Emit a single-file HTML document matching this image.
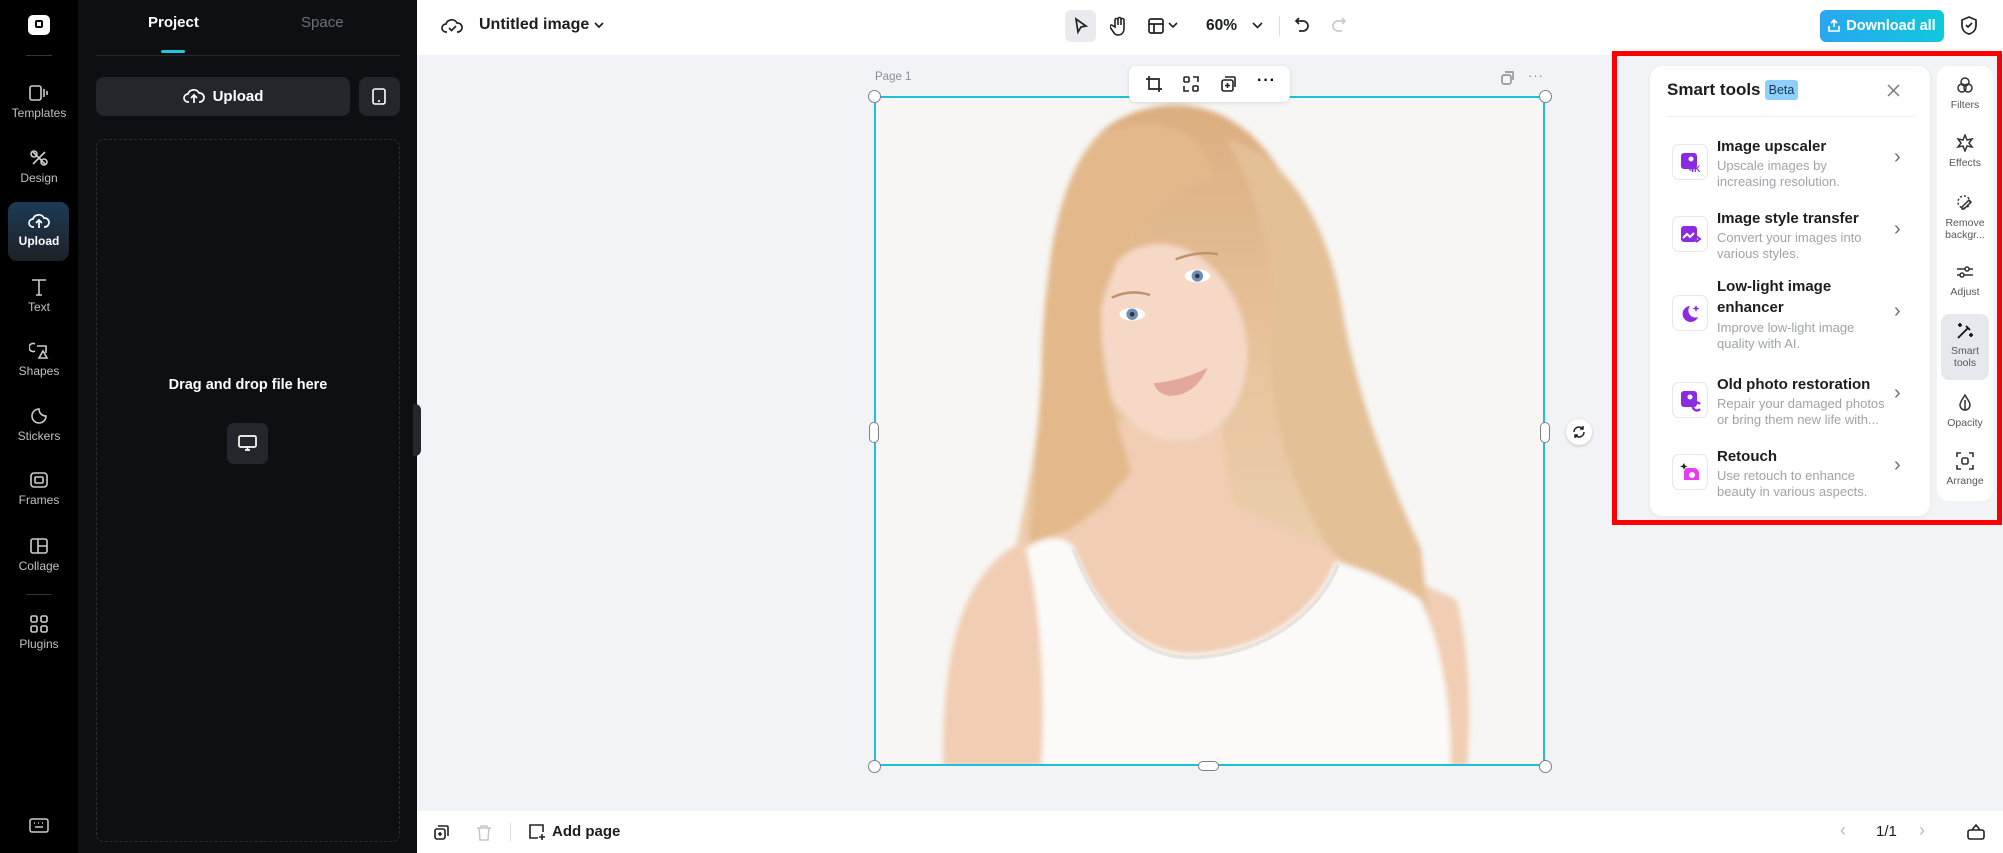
<!DOCTYPE html>
<html><head><meta charset="utf-8"><style>
*{box-sizing:border-box;margin:0;padding:0}
body{width:2003px;height:853px;overflow:hidden;font-family:"Liberation Sans",sans-serif;background:#f1f3f6;position:relative}
.a{position:absolute}
.rail{left:0;top:0;width:78px;height:853px;background:#000}
.ri{position:absolute;left:0;width:78px;text-align:center;color:#bfc1c6;font-size:12px}
.ri svg{display:block;margin:0 auto 4px}
.panel{left:78px;top:0;width:339px;height:853px;background:#0e0f12}
.top{left:417px;top:0;width:1586px;height:55px;background:#fff}
.bot{left:417px;top:811px;width:1586px;height:42px;background:#fff}
.item{position:absolute;left:1672px;width:250px}
.ib{position:absolute;left:0;width:36px;height:36px;border:1px solid #e6e7ea;border-radius:7px;background:#fff}
.it{position:absolute;left:45px;font-size:15px;font-weight:bold;color:#1c1d21;line-height:21px}
.id{position:absolute;left:45px;font-size:13px;color:#a0a3a9;line-height:16px;width:166px}
.ch{position:absolute;left:222px;color:#6b6e75;font-size:20px}
.rr{position:absolute;left:1937px;width:56px;text-align:center;font-size:10.5px;color:#55585e;line-height:12px}
.rr svg{display:block;margin:0 auto 5px}
.h{position:absolute;width:13px;height:13px;border:1.5px solid #7d7f84;border-radius:50%;background:#fff}
</style></head><body>

<div class="a rail">
  <div class="a" style="left:28px;top:15px;width:22px;height:20px;background:#fff;border-radius:5px"><div style="position:absolute;left:7px;top:5px;width:8px;height:8px;border:2px solid #000;border-radius:2px"></div></div>
  <div class="a" style="left:26px;top:55px;width:26px;height:1px;background:#333"></div>
  <div class="ri" style="top:84px"><svg width="20" height="18" viewBox="0 0 20 18" fill="none" stroke="#ccc" stroke-width="1.6"><rect x="1" y="2" width="11" height="14" rx="2"/><path d="M15 5v8M18 7v4"/></svg>Templates</div>
  <div class="ri" style="top:149px"><svg width="20" height="18" viewBox="0 0 20 18" fill="none" stroke="#ccc" stroke-width="1.6"><path d="M4 3l12 12M16 3L4 15"/><circle cx="5" cy="5" r="3"/><circle cx="15" cy="13" r="3"/></svg>Design</div>
  <div class="a" style="left:8px;top:202px;width:61px;height:59px;border-radius:9px;background:linear-gradient(#1c3a55,#1e2126)"></div>
  <div class="ri" style="top:212px;color:#fff;font-weight:bold"><svg width="22" height="18" viewBox="0 0 22 18" fill="none" stroke="#fff" stroke-width="1.7"><path d="M6 15H5a4 4 0 010-8 6 6 0 0111-1 4 4 0 011 9h-1"/><path d="M11 16V9M8 11l3-3 3 3"/></svg>Upload</div>
  <div class="ri" style="top:278px"><svg width="20" height="18" viewBox="0 0 20 18" fill="none" stroke="#ccc" stroke-width="1.6"><path d="M3 2h14M10 2v15M7 17h6"/></svg>Text</div>
  <div class="ri" style="top:342px"><svg width="20" height="18" viewBox="0 0 20 18" fill="none" stroke="#ccc" stroke-width="1.6"><path d="M6 9a4 4 0 110-7M8 4h9v7M10 16l4-7 4 7z"/></svg>Shapes</div>
  <div class="ri" style="top:407px"><svg width="20" height="18" viewBox="0 0 20 18" fill="none" stroke="#ccc" stroke-width="1.6"><path d="M17 9a7 7 0 11-7-7c0 4 3 7 7 7z"/></svg>Stickers</div>
  <div class="ri" style="top:471px"><svg width="20" height="18" viewBox="0 0 20 18" fill="none" stroke="#ccc" stroke-width="1.6"><rect x="2" y="2" width="16" height="14" rx="3"/><rect x="6" y="6" width="8" height="6" rx="1"/></svg>Frames</div>
  <div class="ri" style="top:537px"><svg width="20" height="18" viewBox="0 0 20 18" fill="none" stroke="#ccc" stroke-width="1.6"><rect x="2" y="2" width="16" height="14" rx="2"/><path d="M9 2v14M9 9h9"/></svg>Collage</div>
  <div class="a" style="left:26px;top:594px;width:26px;height:1px;background:#333"></div>
  <div class="ri" style="top:615px"><svg width="20" height="18" viewBox="0 0 20 18" fill="none" stroke="#ccc" stroke-width="1.6"><rect x="2" y="1" width="6" height="6" rx="1.5"/><rect x="12" y="1" width="6" height="6" rx="1.5"/><rect x="2" y="11" width="6" height="6" rx="1.5"/><rect x="12" y="11" width="6" height="6" rx="1.5"/></svg>Plugins</div>
  <svg class="a" style="left:29px;top:818px" width="20" height="15" viewBox="0 0 20 15" fill="none" stroke="#ccc" stroke-width="1.5"><rect x="1" y="1" width="18" height="13" rx="2"/><path d="M5 5h1M9 5h1M13 5h1M6 9h8"/></svg>
</div>

<div class="a panel">
  <div class="a" style="left:70px;top:14px;width:48px;color:#fff;font-weight:bold;font-size:15px">Project</div>
  <div class="a" style="left:223px;top:14px;color:#6e7078;font-size:15px">Space</div>
  <div class="a" style="left:18px;top:55px;width:304px;height:1px;background:#25272c"></div>
  <div class="a" style="left:83px;top:50px;width:24px;height:3px;background:#1fc7d9;border-radius:2px"></div>
  <div class="a" style="left:18px;top:77px;width:254px;height:39px;background:#24262b;border-radius:8px;color:#fff;font-weight:bold;font-size:15px;text-align:center;line-height:39px"><svg style="vertical-align:-4px;margin-right:8px" width="22" height="18" viewBox="0 0 22 18" fill="none" stroke="#fff" stroke-width="1.7"><path d="M6 15H5a4 4 0 010-8 6 6 0 0111-1 4 4 0 011 9h-1"/><path d="M11 16V9M8 11l3-3 3 3"/></svg>Upload</div>
  <div class="a" style="left:281px;top:77px;width:41px;height:39px;background:#24262b;border-radius:8px"><svg style="position:absolute;left:13px;top:11px" width="14" height="17" viewBox="0 0 14 17" fill="none" stroke="#fff" stroke-width="1.6"><rect x="1" y="1" width="12" height="15" rx="2"/><path d="M6 13h2"/></svg></div>
  <div class="a" style="left:18px;top:139px;width:304px;height:703px;border:1px dashed #2c2e33;border-radius:8px"></div>
  <div class="a" style="left:18px;top:377px;width:304px;text-align:center;color:#fff;font-weight:bold;font-size:14.5px">Drag and drop file here</div>
  <div class="a" style="left:149px;top:423px;width:41px;height:41px;background:#24262b;border-radius:7px"><svg style="position:absolute;left:11px;top:12px" width="19" height="17" viewBox="0 0 19 17" fill="none" stroke="#fff" stroke-width="1.7"><rect x="1" y="1" width="17" height="11" rx="1.5"/><path d="M7 15h5M9.5 12v3"/></svg></div>
  <div class="a" style="left:335px;top:404px;width:8px;height:52px;background:#25272c;border-radius:0 6px 6px 0"></div>
</div>

<div class="a top">
  <svg class="a" style="left:24px;top:16px" width="22" height="20" viewBox="0 0 22 20" fill="none" stroke="#222" stroke-width="1.7"><path d="M6 16H5a4 4 0 010-8 6 6 0 0111-1 4 4 0 011 9h-1"/><path d="M8 12l2.5 2.5L15 10"/></svg>
  <div class="a" style="left:62px;top:16px;font-size:16px;color:#1c1d21;font-weight:bold">Untitled image</div>
  <svg class="a" style="left:176px;top:21px" width="12" height="8" viewBox="0 0 12 8" fill="none" stroke="#222" stroke-width="1.7"><path d="M2 2l4 4 4-4"/></svg>
  <div class="a" style="left:648px;top:10px;width:31px;height:32px;background:#e9ebef;border-radius:6px"><svg style="position:absolute;left:8px;top:7px" width="16" height="18" viewBox="0 0 16 18" fill="none" stroke="#222" stroke-width="1.7"><path d="M3 2l10 7-5 1-3 5z"/></svg></div>
  <svg class="a" style="left:693px;top:16px" width="18" height="20" viewBox="0 0 18 20" fill="none" stroke="#222" stroke-width="1.6"><path d="M5 11V4a1.5 1.5 0 013 0v5V3a1.5 1.5 0 013 0v6V4a1.5 1.5 0 013 0v8c0 4-2 7-6 7-3 0-4-2-6-5l-2-3a1.5 1.5 0 012.5-1.5z"/></svg>
  <svg class="a" style="left:730px;top:17px" width="18" height="18" viewBox="0 0 18 18" fill="none" stroke="#222" stroke-width="1.7"><rect x="2" y="2" width="14" height="14" rx="2"/><path d="M2 7h14M7 7v9"/></svg>
  <svg class="a" style="left:751px;top:22px" width="10" height="7" viewBox="0 0 10 7" fill="none" stroke="#222" stroke-width="1.6"><path d="M1 1l4 4 4-4"/></svg>
  <div class="a" style="left:789px;top:17px;font-size:15.5px;color:#1c1d21;font-weight:bold">60%</div>
  <svg class="a" style="left:835px;top:22px" width="11" height="7" viewBox="0 0 11 7" fill="none" stroke="#222" stroke-width="1.6"><path d="M1 1l4.5 4.5L10 1"/></svg>
  <div class="a" style="left:862px;top:16px;width:1px;height:20px;background:#dcdee2"></div>
  <svg class="a" style="left:877px;top:16px" width="16" height="20" viewBox="0 0 16 20" fill="none" stroke="#222" stroke-width="1.7"><path d="M5 2L2 5l3 3M2 5h7a5 5 0 010 10H5"/></svg>
  <svg class="a" style="left:914px;top:16px" width="16" height="20" viewBox="0 0 16 20" fill="none" stroke="#c8cacf" stroke-width="1.7"><path d="M11 2l3 3-3 3M14 5H7a5 5 0 000 10h4"/></svg>
  <div class="a" style="left:1403px;top:10px;width:124px;height:32px;border-radius:6px;background:linear-gradient(90deg,#2aa6f0,#10c8dc);color:#fff;font-weight:bold;font-size:14.5px;line-height:32px;text-align:center"><svg style="vertical-align:-2px;margin-right:6px" width="12" height="14" viewBox="0 0 12 14" fill="none" stroke="#fff" stroke-width="1.6"><path d="M6 9V2M3 5l3-3 3 3M1 8v5h10V8"/></svg>Download all</div>
  <svg class="a" style="left:1543px;top:15px" width="18" height="21" viewBox="0 0 18 21" fill="none" stroke="#222" stroke-width="1.7"><path d="M9 2l7 3v5c0 5-3 8-7 9-4-1-7-4-7-9V5z"/><path d="M6 10l2 2 4-4"/></svg>
</div>

<!-- canvas -->
<div class="a" style="left:875px;top:71px;font-size:11.5px;color:#8c8f95">Page 1</div>
<svg class="a" style="left:1500px;top:71px" width="15" height="15" viewBox="0 0 15 15" fill="none" stroke="#888" stroke-width="1.4"><rect x="2" y="4" width="9" height="9" rx="2"/><path d="M5 1h8v8"/></svg>
<div class="a" style="left:1528px;top:68px;font-size:13px;color:#888;letter-spacing:1px">···</div>

<div class="a" style="left:874px;top:96px;width:671px;height:670px;overflow:hidden;background:#f7f6f4">
<svg width="671" height="670" viewBox="684 75 525 525" preserveAspectRatio="none">
<defs>
<linearGradient id="hr" x1="0" y1="0" x2="0" y2="1"><stop offset="0" stop-color="#dcae80"/><stop offset=".5" stop-color="#e8c59e"/><stop offset="1" stop-color="#ecd3b6"/></linearGradient>
<filter id="b"><feGaussianBlur stdDeviation="2"/></filter>
</defs>
<rect x="684" y="75" width="525" height="525" fill="#f7f6f4"/>
<g filter="url(#b)">
<!-- hair -->
<path d="M915 82 C960 80 995 110 1015 160 C1035 220 1045 290 1065 350 C1085 410 1105 460 1125 520 L1060 470 L840 420 L795 430 C800 400 815 340 815 290 C815 220 830 140 860 105 C875 90 895 84 915 82z" fill="url(#hr)"/>
<!-- skin: shoulders/chest/neck -->
<path d="M738 600 C738 520 748 460 790 430 C820 415 850 405 870 395 L875 330 L955 325 L965 395 C1010 420 1080 440 1140 470 C1152 520 1150 570 1148 600z" fill="#f1cdb3"/>
<!-- face -->
<ellipse cx="915" cy="268" rx="60" ry="78" transform="rotate(-14 915 268)" fill="#f5d9c6"/>
<!-- front hair strands -->
<path d="M860 105 C900 90 940 95 950 140 C905 150 875 190 862 240 C860 290 875 330 885 370 C860 400 840 420 805 425 C810 370 815 300 818 240 C822 180 835 130 860 105z" fill="#e3b98c"/>
<path d="M960 110 C990 160 1000 220 995 280 C995 330 1010 380 1040 430 C1070 460 1100 480 1120 500 L1112 430 C1080 360 1060 300 1050 240 C1040 180 1010 120 960 110z" fill="#e4c096"/>
<!-- tank top -->
<path d="M803 430 C815 420 830 418 840 428 C855 470 885 510 930 512 C985 512 1030 480 1045 440 C1065 445 1090 455 1112 470 C1130 510 1136 560 1135 600 L815 600 C818 540 815 480 803 430z" fill="#fbfaf8"/>
</g>
<path d="M840 430 C857 475 887 514 930 515 C985 515 1032 482 1047 442" stroke="#e8e3dd" stroke-width="3" fill="none"/>
<ellipse cx="886" cy="246" rx="10" ry="5" fill="#fff"/>
<ellipse cx="937" cy="216" rx="10" ry="5" fill="#fff"/>
<circle cx="886" cy="246" r="4.5" fill="#6f8fb8"/>
<circle cx="937" cy="216" r="4.5" fill="#6f8fb8"/>
<circle cx="886" cy="246" r="1.8" fill="#333"/>
<circle cx="937" cy="216" r="1.8" fill="#333"/>
<path d="M870 233 Q885 226 900 231 M920 203 Q938 196 953 199" stroke="#c09370" stroke-width="2" fill="none"/>
<path d="M903 300 Q925 298 945 288 Q935 310 915 310 Q905 308 903 300z" fill="#e2a89c"/>
</svg>
</div>
<div class="a" style="left:874px;top:96px;width:671px;height:670px;border:2px solid #1fc0d6"></div>
<div class="a" style="left:1129px;top:66px;width:161px;height:36px;background:#fff;border-radius:7px;box-shadow:0 1px 4px rgba(0,0,0,.12)">
  <svg class="a" style="left:16px;top:9px" width="18" height="18" viewBox="0 0 18 18" fill="none" stroke="#222" stroke-width="1.7"><path d="M4 1v13h13M1 4h13v13"/></svg>
  <svg class="a" style="left:53px;top:9px" width="18" height="18" viewBox="0 0 18 18" fill="none" stroke="#222" stroke-width="1.6"><rect x="2" y="2" width="5" height="5" rx="1"/><path d="M11 2h5v5M2 11v5h5"/><rect x="11" y="11" width="5" height="5" rx="1"/></svg>
  <svg class="a" style="left:90px;top:9px" width="18" height="18" viewBox="0 0 18 18" fill="none" stroke="#222" stroke-width="1.6"><rect x="3" y="5" width="11" height="11" rx="2"/><path d="M6 2h9a1 1 0 011 1v9"/><path d="M8.5 8v5M6 10.5h5"/></svg>
  <div class="a" style="left:128px;top:6px;font-size:16px;font-weight:bold;letter-spacing:1px">···</div>
</div>
<div class="h" style="left:868px;top:90px"></div><div class="h" style="left:1539px;top:90px"></div>
<div class="h" style="left:868px;top:760px"></div><div class="h" style="left:1539px;top:760px"></div>
<div class="h" style="left:869px;top:422px;width:10px;height:21px;border-radius:5px"></div>
<div class="h" style="left:1540px;top:422px;width:10px;height:21px;border-radius:5px"></div>
<div class="h" style="left:1198px;top:761px;width:21px;height:10px;border-radius:5px"></div>
<div class="a" style="left:1566px;top:419px;width:26px;height:26px;border-radius:50%;background:#fff;box-shadow:0 1px 3px rgba(0,0,0,.2)"><svg style="position:absolute;left:6px;top:6px" width="14" height="14" viewBox="0 0 14 14" fill="none" stroke="#222" stroke-width="1.5"><path d="M2 7a5 5 0 019-3M12 7a5 5 0 01-9 3M11 1v3H8M3 13v-3h3"/></svg></div>

<!-- red box + smart tools -->
<div class="a" style="left:1612px;top:51px;width:390px;height:474px;border:5px solid #f00"></div>
<div class="a" style="left:1650px;top:66px;width:280px;height:450px;background:#fff;border-radius:12px;box-shadow:0 1px 4px rgba(0,0,0,.06)"></div>
<div class="a" style="left:1667px;top:80px;font-size:17px;font-weight:bold;color:#1c1d21">Smart tools</div>
<div class="a" style="left:1765px;top:80px;width:33px;height:20px;background:#8fd0fb;border-radius:3px;font-size:12.5px;color:#1c3a55;text-align:center;line-height:20px">Beta</div>
<svg class="a" style="left:1886px;top:83px" width="15" height="15" viewBox="0 0 15 15" stroke="#777" stroke-width="1.5"><path d="M2 2l11 11M13 2L2 13"/></svg>
<div class="a" style="left:1667px;top:116px;width:247px;height:1px;background:#eceef1"></div>

<div class="item" style="top:140px"><div class="ib" style="top:4px"><svg style="position:absolute;left:7px;top:7px" width="22" height="22" viewBox="0 0 22 22"><rect x="1" y="1" width="16" height="16" rx="3" fill="#8a2be2"/><circle cx="11" cy="7" r="2.5" fill="#fff"/><text x="9" y="20" font-size="9" font-weight="bold" fill="#8a2be2" font-family="Liberation Sans">4K</text></svg></div><div class="it" style="top:-4px">Image upscaler</div><div class="id" style="top:18px">Upscale images by<br>increasing resolution.</div><div class="ch" style="top:6px">›</div></div>
<div class="item" style="top:212px"><div class="ib" style="top:4px"><svg style="position:absolute;left:7px;top:7px" width="22" height="22" viewBox="0 0 22 22"><rect x="1" y="2" width="16" height="16" rx="3" fill="#8a2be2"/><path d="M3 14l4-4 3 3 4-4" stroke="#fff" stroke-width="2" fill="none"/><path d="M16 12l4 3-4 3" stroke="#8a2be2" stroke-width="2" fill="none"/></svg></div><div class="it" style="top:-4px">Image style transfer</div><div class="id" style="top:18px">Convert your images into<br>various styles.</div><div class="ch" style="top:6px">›</div></div>
<div class="item" style="top:280px"><div class="ib" style="top:15px"><svg style="position:absolute;left:7px;top:7px" width="22" height="22" viewBox="0 0 22 22"><path d="M10 3a8 8 0 108 11A7 7 0 0110 3z" fill="#8a2be2"/><path d="M16 2l1 2.5 2.5 1-2.5 1-1 2.5-1-2.5-2.5-1 2.5-1z" fill="#8a2be2"/></svg></div><div class="it" style="top:-4px">Low-light image<br>enhancer</div><div class="id" style="top:40px">Improve low-light image<br>quality with AI.</div><div class="ch" style="top:20px">›</div></div>
<div class="item" style="top:378px"><div class="ib" style="top:4px"><svg style="position:absolute;left:7px;top:7px" width="22" height="22" viewBox="0 0 22 22"><rect x="1" y="1" width="16" height="16" rx="3" fill="#8a2be2"/><circle cx="10" cy="7" r="2.5" fill="#fff"/><path d="M20 14a4 4 0 10 0 5" stroke="#8a2be2" stroke-width="2.4" fill="none"/></svg></div><div class="it" style="top:-4px">Old photo restoration</div><div class="id" style="top:18px;width:178px;white-space:nowrap;overflow:hidden">Repair your damaged photos<br>or bring them new life with...</div><div class="ch" style="top:4px">›</div></div>
<div class="item" style="top:450px"><div class="ib" style="top:4px"><svg style="position:absolute;left:7px;top:7px" width="22" height="22" viewBox="0 0 22 22"><path d="M6 6h8a5 5 0 015 5v7H4V9z" fill="#e83cf0"/><circle cx="12" cy="13" r="3" fill="#fff"/><path d="M4 1l1 2.5 2.5 1-2.5 1-1 2.5-1-2.5L0 4.5l2.5-1z" fill="#222"/></svg></div><div class="it" style="top:-4px">Retouch</div><div class="id" style="top:18px">Use retouch to enhance<br>beauty in various aspects.</div><div class="ch" style="top:4px">›</div></div>

<div class="a" style="left:1937px;top:66px;width:56px;height:435px;background:#fff;border-radius:12px"></div>
<div class="a" style="left:1941px;top:314px;width:48px;height:66px;background:#e5e8ec;border-radius:8px"></div>
<div class="rr" style="top:76px"><svg width="18" height="18" viewBox="0 0 18 18" fill="none" stroke="#333" stroke-width="1.5"><circle cx="9" cy="6" r="4"/><circle cx="6" cy="12" r="4"/><circle cx="12" cy="12" r="4"/></svg>Filters</div>
<div class="rr" style="top:134px"><svg width="18" height="18" viewBox="0 0 18 18" fill="none" stroke="#333" stroke-width="1.5"><path d="M9 1l2 5 5-1-3 4 3 4-5-1-2 5-2-5-5 1 3-4-3-4 5 1z"/></svg>Effects</div>
<div class="rr" style="top:194px"><svg width="18" height="18" viewBox="0 0 18 18" fill="none" stroke="#333" stroke-width="1.5"><circle cx="8" cy="8" r="6" stroke-dasharray="2 2"/><path d="M6 13l7-7 2 2-7 7H6z"/></svg>Remove<br>backgr...</div>
<div class="rr" style="top:263px"><svg width="18" height="18" viewBox="0 0 18 18" fill="none" stroke="#333" stroke-width="1.5"><path d="M1 6h16M1 12h16"/><circle cx="11" cy="6" r="2" fill="#fff"/><circle cx="6" cy="12" r="2" fill="#fff"/></svg>Adjust</div>
<div class="rr" style="top:322px"><svg width="18" height="18" viewBox="0 0 18 18" fill="none" stroke="#111" stroke-width="1.8"><path d="M2 16L12 6M10 4l4 4"/><path d="M4 1v4M2 3h4M15 11v4M13 13h4"/></svg>Smart<br>tools</div>
<div class="rr" style="top:394px"><svg width="18" height="18" viewBox="0 0 18 18" fill="none" stroke="#333" stroke-width="1.5"><path d="M9 1C6 6 4 8 4 11a5 5 0 0010 0c0-3-2-5-5-10z"/><path d="M9 6v10"/></svg>Opacity</div>
<div class="rr" style="top:452px"><svg width="18" height="18" viewBox="0 0 18 18" fill="none" stroke="#333" stroke-width="1.6"><path d="M1 5V1h4M13 1h4v4M17 13v4h-4M5 17H1v-4"/><rect x="6" y="6" width="6" height="6" rx="1.5"/></svg>Arrange</div>

<div class="a bot">
  <svg class="a" style="left:16px;top:13px" width="17" height="17" viewBox="0 0 17 17" fill="none" stroke="#222" stroke-width="1.6"><rect x="2" y="5" width="10" height="10" rx="2"/><path d="M5 2h9a1 1 0 011 1v9"/><path d="M7 8v4M5 10h4"/></svg>
  <svg class="a" style="left:59px;top:13px" width="16" height="17" viewBox="0 0 16 17" fill="none" stroke="#c5c7cc" stroke-width="1.5"><path d="M1 4h14M5 4V2h6v2M3 4l1 12h8l1-12"/></svg>
  <div class="a" style="left:93px;top:12px;width:1px;height:18px;background:#dcdee2"></div>
  <svg class="a" style="left:111px;top:12px" width="18" height="18" viewBox="0 0 18 18" fill="none" stroke="#222" stroke-width="1.6"><path d="M10 15H2V2h13v7"/><path d="M14 11v6M11 14h6"/></svg>
  <div class="a" style="left:135px;top:12px;font-size:15px;font-weight:bold;color:#1c1d21">Add page</div>
  <div class="a" style="left:1423px;top:9px;font-size:18px;color:#bbb">‹</div>
  <div class="a" style="left:1459px;top:12px;font-size:15px;color:#1c1d21">1/1</div>
  <div class="a" style="left:1502px;top:9px;font-size:18px;color:#bbb">›</div>
  <svg class="a" style="left:1550px;top:12px" width="18" height="17" viewBox="0 0 18 17" fill="none" stroke="#222" stroke-width="1.6"><rect x="1" y="7" width="16" height="9" rx="2"/><path d="M5 7l4-5 4 5"/></svg>
</div>
</body></html>
